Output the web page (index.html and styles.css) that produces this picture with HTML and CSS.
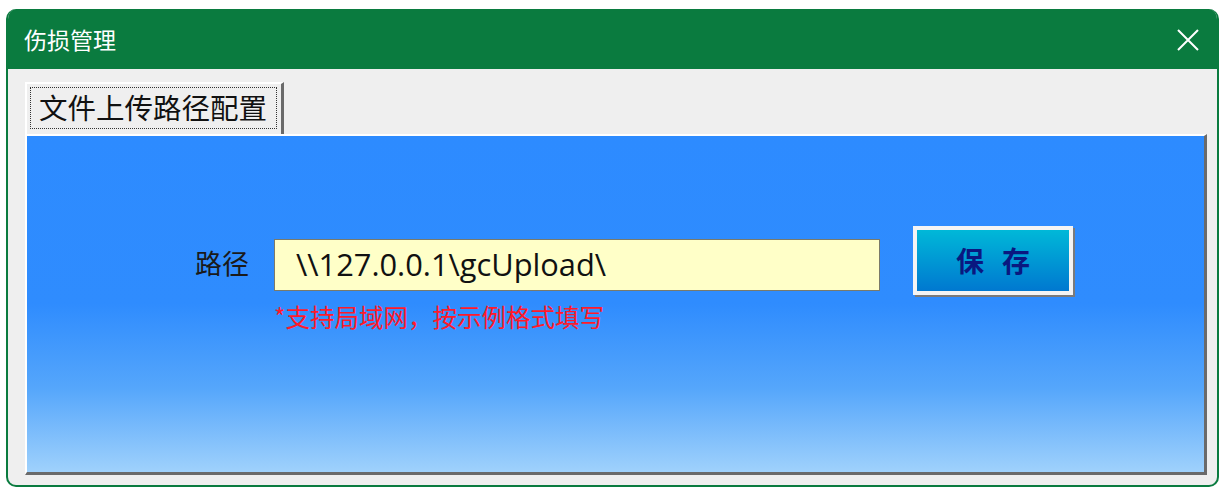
FILE: index.html
```html
<!DOCTYPE html>
<html lang="zh-CN">
<head>
    <meta charset="UTF-8">
    <meta name="viewport" content="width=device-width, initial-scale=1.0">
    <title>伤损管理</title>
    <link rel="stylesheet" href="styles.css">
</head>
<body>
    <div class="window">
        <header class="titlebar">
            <span class="title">伤损管理</span>
            <button class="close" type="button" aria-label="关闭">
                <svg width="22" height="22" viewBox="0 0 22 22">
                    <path d="M1 1 L21 21 M21 1 L1 21" stroke="#ffffff" stroke-width="2" fill="none"/>
                </svg>
            </button>
        </header>
        <div class="content">
            <div class="tabs">
                <div class="tab"><span class="tab-label">文件上传路径配置</span></div>
            </div>
            <div class="panel">
                <div class="form-row">
                    <label class="field-label" for="path">路径</label>
                    <div class="field">
                        <input id="path" class="path-input" type="text" value="\\127.0.0.1\gcUpload\">
                        <p class="hint">*支持局域网，按示例格式填写</p>
                    </div>
                    <button class="save" type="button">保存</button>
                </div>
            </div>
        </div>
    </div>
</body>
</html>
```

FILE: styles.css
```css
body {
    margin: 0;
    padding: 9px 0 0 6px;
    background: #ffffff;
    font-family: "Noto Sans CJK SC", "Noto Sans", sans-serif;
}
.window {
    width: 1209px;
    height: 476px;
    border: 2px solid #0a7b3f;
    border-top: none;
    border-radius: 10px;
    background: #efefef;
    display: flex;
    flex-direction: column;
    overflow: hidden;
}
.titlebar {
    height: 60px;
    background: #0a7b3f;
    display: flex;
    align-items: center;
    justify-content: space-between;
    padding: 0 18px 0 16px;
}
.title {
    color: #ffffff;
    font-size: 23px;
}
.close {
    background: none;
    border: none;
    padding: 0;
    width: 22px;
    height: 22px;
    margin-top: 2px;
}
.content {
    flex: 1;
    padding: 13px 10px 10px 17px;
    display: flex;
    flex-direction: column;
}
.tabs {
    display: flex;
}
.tab {
    padding: 3px 4px 0 3px;
    border-top: 2px solid #ffffff;
    border-left: 2px solid #ffffff;
    border-right: 3px solid #6a6a6a;
    background: #efefef;
    box-sizing: border-box;
    height: 52px;
    width: 259px;
}
.tab-label {
    display: block;
    height: 42px;
    border: 1px dotted #333333;
    box-sizing: border-box;
    font-size: 28.5px;
    line-height: 38px;
    padding-left: 8px;
    color: #111111;
    white-space: nowrap;
}
.panel {
    flex: 1;
    border-top: 2px solid #ffffff;
    border-left: 2px solid #ffffff;
    border-right: 3px solid #6a6a6a;
    border-bottom: 3px solid #6a6a6a;
    background: linear-gradient(#2d8bff 0%, #2f8cfe 50%, #55a6fb 75%, #9fd1fc 100%);
    padding: 90px 0 0 168px;
}
.form-row {
    display: flex;
    align-items: flex-start;
}
.field-label {
    width: 56px;
    margin-top: 13px;
    line-height: 48px;
    font-size: 27px;
    color: #1a1a1a;
    white-space: nowrap;
}
.field {
    margin-left: 23px;
    margin-top: 13px;
    display: flex;
    flex-direction: column;
}
.path-input {
    width: 606px;
    height: 52px;
    box-sizing: border-box;
    border: 1px solid #7a7a6a;
    background: #ffffc8;
    padding: 0 0 3px 21px;
    font-family: "Open Sans", "Noto Sans", sans-serif;
    font-size: 30.8px;
    color: #111111;
    outline: none;
}
.hint {
    margin: 10px 0 0 0;
    color: #ff1a2a;
    font-size: 24.5px;
    line-height: 32px;
    white-space: nowrap;
}
.save {
    margin-left: 33px;
    width: 160px;
    height: 69px;
    box-sizing: border-box;
    border: 4px solid #f4f4f4;
    box-shadow: 2px 2px 0 #7a7a7a;
    background: linear-gradient(#00b8d8, #0078d0);
    color: #0a1880;
    font-family: "Noto Sans CJK SC", sans-serif;
    font-weight: bold;
    font-size: 28px;
    letter-spacing: 18px;
    padding: 0 0 2px 18px;
}
```
